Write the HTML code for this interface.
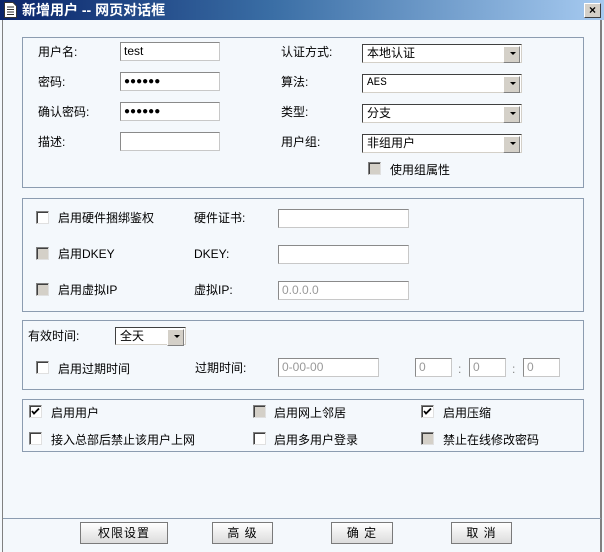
<!DOCTYPE html>
<html><head><meta charset="utf-8"><style>
*{margin:0;padding:0;box-sizing:border-box}
body{width:604px;height:552px;background:#f4f8fc;font-family:"Liberation Sans","Noto Sans CJK SC","WenQuanYi Zen Hei",sans-serif;font-size:12px;color:#000;position:relative;overflow:hidden}
.a{position:absolute;white-space:nowrap;line-height:14px}
.title{position:absolute;left:0;top:0;width:604px;height:20px;background:linear-gradient(90deg,#0a246a 0%,#3a6ea5 45%,#a6caf0 100%);}
.title span{position:absolute;left:22px;top:2px;color:#fff;font-weight:bold;font-size:14px;line-height:16px}
.frame{position:absolute;left:2px;top:20px;width:600px;height:532px;border-left:1px solid #808080;border-right:2px solid #808080}
.box{position:absolute;left:22px;width:562px;border:1px solid #8c9cb0;background:#f4f8fc}
.in{position:absolute;height:19px;background:#fff;border:1px solid;border-color:#8a8a8a #c8c8c8 #c8c8c8 #8a8a8a;padding-left:3px;line-height:17px;font-size:12px}
.in.g{color:#999}
.pw{font-size:10px;letter-spacing:0}
.sel{position:absolute;height:19px;background:#fff;border:1px solid;border-color:#404040 #d4d0c8 #d4d0c8 #404040;padding-left:4px;line-height:17px}
.sel:after{content:"";position:absolute;right:1px;top:1px;width:15px;height:15px;background:#d4d0c8;border:1px solid;border-color:#fff #808080 #808080 #fff}
.sel i{position:absolute;right:5px;top:7px;width:0;height:0;border-left:3px solid transparent;border-right:3px solid transparent;border-top:3px solid #000;z-index:2}
.cb{position:absolute;width:13px;height:13px;background:#fff;border:1px solid;border-color:#808080 #e0e0e0 #e0e0e0 #808080;box-shadow:inset 1px 1px 0 #404040}
.cb.d{background:#d4d0c8}
.cb svg{position:absolute;left:1px;top:1px}
.btn{position:absolute;top:522px;height:22px;border:1px solid #7a7a7a;background:linear-gradient(#ffffff,#dcdcdc);text-align:center;line-height:20px;letter-spacing:1px}
</style></head><body>
<div class="title"><svg style="position:absolute;left:4px;top:2px" width="13" height="16" viewBox="0 0 13 16"><path d="M0.5 0.5H9L12.5 4V15.5H0.5Z" fill="#fff" stroke="#333"/><path d="M3 5H10M3 7.5H10M3 10H10M3 12.5H10" stroke="#333"/></svg><span>新增用户 -- 网页对话框</span>
<div style="position:absolute;left:584px;top:3px;width:17px;height:15px;background:#d4d0c8;border:1px solid;border-color:#fff #404040 #404040 #fff;text-align:center;font-weight:bold;font-size:12px;line-height:12px">×</div></div>
<div class="frame"></div>
<div class="box" style="top:37px;height:151px"></div>
<div class="box" style="top:198px;height:114px"></div>
<div class="box" style="top:320px;height:70px"></div>
<div class="box" style="top:399px;height:53px"></div>
<div style="position:absolute;left:3px;top:518px;width:598px;height:1px;background:#8c9cb0"></div>

<div class="a" style="left:38px;top:45px">用户名:</div>
<div class="a" style="left:38px;top:75px">密码:</div>
<div class="a" style="left:38px;top:105px">确认密码:</div>
<div class="a" style="left:38px;top:135px">描述:</div>
<div class="in" style="left:120px;top:42px;width:100px">test</div>
<div class="in pw" style="left:120px;top:72px;width:100px">●●●●●●</div>
<div class="in pw" style="left:120px;top:102px;width:100px">●●●●●●</div>
<div class="in" style="left:120px;top:132px;width:100px"></div>
<div class="a" style="left:281px;top:45px">认证方式:</div>
<div class="a" style="left:281px;top:75px">算法:</div>
<div class="a" style="left:281px;top:105px">类型:</div>
<div class="a" style="left:281px;top:135px">用户组:</div>
<div class="sel" style="left:362px;top:44px;width:160px">本地认证<i></i></div>
<div class="sel" style="left:362px;top:74px;width:160px;font-family:'Liberation Mono',monospace;font-size:11px">AES<i></i></div>
<div class="sel" style="left:362px;top:104px;width:160px">分支<i></i></div>
<div class="sel" style="left:362px;top:134px;width:160px">非组用户<i></i></div>
<div class="cb d" style="left:368px;top:162px"></div>
<div class="a" style="left:390px;top:163px">使用组属性</div>

<div class="cb" style="left:36px;top:211px"></div><div class="a" style="left:58px;top:211px">启用硬件捆绑鉴权</div>
<div class="a" style="left:194px;top:211px">硬件证书:</div><div class="in" style="left:278px;top:209px;width:131px"></div>
<div class="cb d" style="left:36px;top:247px"></div><div class="a" style="left:58px;top:247px">启用DKEY</div>
<div class="a" style="left:194px;top:247px">DKEY:</div><div class="in" style="left:278px;top:245px;width:131px"></div>
<div class="cb d" style="left:36px;top:283px"></div><div class="a" style="left:58px;top:283px">启用虚拟IP</div>
<div class="a" style="left:194px;top:283px">虚拟IP:</div><div class="in g" style="left:278px;top:281px;width:131px">0.0.0.0</div>

<div class="a" style="left:28px;top:329px">有效时间:</div>
<div class="sel" style="left:115px;top:327px;width:71px;height:18px">全天<i style="top:7px"></i></div>
<div class="cb" style="left:36px;top:361px"></div><div class="a" style="left:58px;top:362px">启用过期时间</div>
<div class="a" style="left:195px;top:361px">过期时间:</div>
<div class="in g" style="left:278px;top:358px;width:101px">0-00-00</div>
<div class="in g" style="left:415px;top:358px;width:37px">0</div>
<div class="a" style="left:458px;top:362px;color:#888">:</div>
<div class="in g" style="left:469px;top:358px;width:37px">0</div>
<div class="a" style="left:512px;top:362px;color:#888">:</div>
<div class="in g" style="left:523px;top:358px;width:37px">0</div>

<div class="cb" style="left:29px;top:405px"><svg width="9" height="9" viewBox="0 0 9 9"><path d="M1 4L3 6.5L8 1.5" fill="none" stroke="#000" stroke-width="1.8"/></svg></div><div class="a" style="left:51px;top:406px">启用用户</div>
<div class="cb d" style="left:253px;top:405px"></div><div class="a" style="left:274px;top:406px">启用网上邻居</div>
<div class="cb" style="left:421px;top:405px"><svg width="9" height="9" viewBox="0 0 9 9"><path d="M1 4L3 6.5L8 1.5" fill="none" stroke="#000" stroke-width="1.8"/></svg></div><div class="a" style="left:443px;top:406px">启用压缩</div>
<div class="cb" style="left:29px;top:432px"></div><div class="a" style="left:51px;top:433px">接入总部后禁止该用户上网</div>
<div class="cb" style="left:253px;top:432px"></div><div class="a" style="left:274px;top:433px">启用多用户登录</div>
<div class="cb d" style="left:421px;top:432px"></div><div class="a" style="left:443px;top:433px">禁止在线修改密码</div>

<div class="btn" style="left:80px;width:88px">权限设置</div>
<div class="btn" style="left:212px;width:61px">高 级</div>
<div class="btn" style="left:331px;width:62px">确 定</div>
<div class="btn" style="left:451px;width:61px">取 消</div>
</body></html>
